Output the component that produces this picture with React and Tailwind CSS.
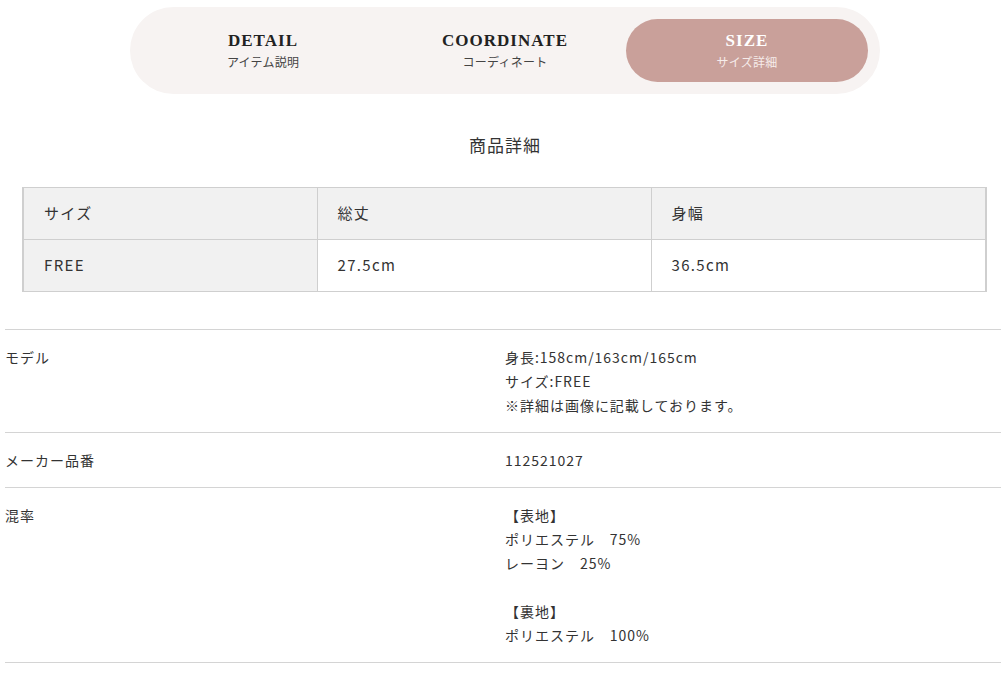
const jp = { fontFamily: '"Noto Sans CJK JP", "Noto Sans", sans-serif' };
const serif = { fontFamily: '"Liberation Serif", "DejaVu Serif", serif' };

const tabs = [
  { en: "DETAIL", ja: "アイテム説明" },
  { en: "COORDINATE", ja: "コーディネート" },
  { en: "SIZE", ja: "サイズ詳細", active: true },
];

const specs = [
  { label: "モデル", lines: ["身長:158cm/163cm/165cm", "サイズ:FREE", "※詳細は画像に記載しております。"] },
  { label: "メーカー品番", lines: ["112521027"] },
  {
    label: "混率",
    lines: ["【表地】", "ポリエステル　75%", "レーヨン　25%", "", "【裏地】", "ポリエステル　100%"],
  },
];

export default function App() {
  return (
    <div className="w-[1001px] h-[680px] bg-white text-[#333] overflow-hidden" style={jp}>
      {/* tabs */}
      <div className="pt-[7px] flex justify-center pl-[9px]">
        <div className="w-[750px] h-[87px] rounded-full bg-[#f7f3f2] p-3 grid grid-cols-3">
          {tabs.map((t) => (
            <div
              key={t.en}
              className={
                t.active
                  ? "rounded-full bg-[#c9a09a] flex flex-col items-center justify-center text-white"
                  : "rounded-full flex flex-col items-center justify-center text-[#222]"
              }
            >
              <span className="text-[17px] leading-[20px] font-bold tracking-[0.06em]" style={serif}>
                {t.en}
              </span>
              <span
                className={
                  t.active
                    ? "text-[12px] leading-[16px] mt-[3px] tracking-[0.02em] text-[#f6ecea]"
                    : "text-[12px] leading-[16px] mt-[3px] tracking-[0.02em] text-[#444]"
                }
              >
                {t.ja}
              </span>
            </div>
          ))}
        </div>
      </div>

      {/* heading */}
      <h2 className="mt-[39px] text-center text-[17px] leading-[24px] tracking-[0.06em] text-[#333] pl-[9px]">
        商品詳細
      </h2>

      {/* size table */}
      <div className="mt-[30px] ml-[22px] w-[965px]">
        <table className="w-full border-collapse border-l-2 border-r-2 border-[#cfcfcf] text-[15px] tracking-[0.09em]">
          <tbody>
            <tr className="h-[52px] bg-[#f1f1f1]">
              <th className="w-[294px] border border-[#cfcfcf] text-left font-normal pl-5">サイズ</th>
              <th className="w-[334px] border border-[#cfcfcf] text-left font-normal pl-5">総丈</th>
              <th className="border border-[#cfcfcf] text-left font-normal pl-5">身幅</th>
            </tr>
            <tr className="h-[52px]">
              <th className="border border-[#cfcfcf] bg-[#f1f1f1] text-left font-normal pl-5">FREE</th>
              <td className="border border-[#cfcfcf] pl-5">27.5cm</td>
              <td className="border border-[#cfcfcf] pl-5">36.5cm</td>
            </tr>
          </tbody>
        </table>
      </div>

      {/* spec list */}
      <div className="mt-[37px] ml-[5px] border-t border-[#d4d4d4]">
        {specs.map((s) => (
          <div key={s.label} className="flex border-b border-[#d4d4d4] py-[15px] text-[14px] leading-[24px] tracking-[0.07em]">
            <div className="w-[500px]">{s.label}</div>
            <div className="flex-1">
              {s.lines.map((l, i) => (
                <div key={i} className="h-[24px] whitespace-pre">
                  {l}
                </div>
              ))}
            </div>
          </div>
        ))}
      </div>
    </div>
  );
}
